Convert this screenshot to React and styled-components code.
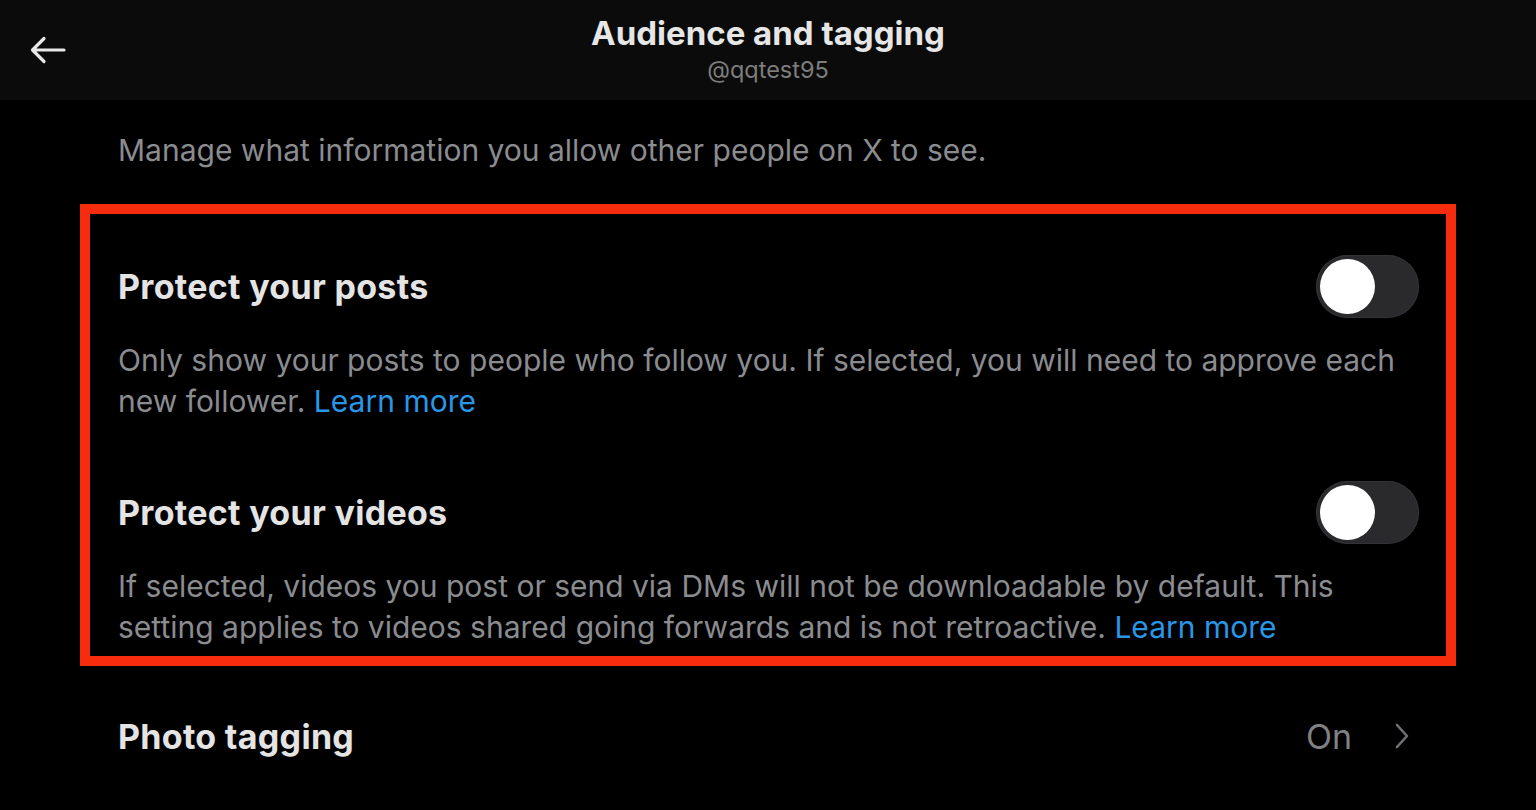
import React from "react";
import styled, { createGlobalStyle } from "styled-components";

const Global = createGlobalStyle`
  html, body { margin: 0; padding: 0; background: #000; }
  body { font-family: Inter, "Noto Sans", sans-serif; -webkit-font-smoothing: antialiased; }
`;

const Page = styled.div`
  width: 1536px;
  height: 810px;
  background: #000;
  overflow: hidden;
  display: flex;
  flex-direction: column;
`;

const Header = styled.header`
  height: 100px;
  background: #0b0b0b;
  display: grid;
  grid-template-columns: 100px 1fr 100px;
  align-items: center;
`;

const BackButton = styled.button`
  background: none;
  border: none;
  padding: 0 0 0 29px;
  display: flex;
  align-items: center;
  color: #e7e7e7;
  height: 100%;
`;

const TitleBlock = styled.div`
  display: flex;
  flex-direction: column;
  align-items: center;
  margin-top: -3px;
`;

const Title = styled.h1`
  margin: 0;
  font-family: Inter, sans-serif;
  font-weight: 700;
  font-size: 33px;
  line-height: 40px;
  letter-spacing: 0px;
  color: #e6e6e6;
`;

const Handle = styled.div`
  font-size: 23.5px;
  line-height: 30px;
  margin-top: 2px;
  color: #7d7d7d;
  letter-spacing: 0px;
`;

const Body = styled.main`
  padding: 30px 80px 0 80px;
  display: flex;
  flex-direction: column;
`;

const Intro = styled.p`
  margin: 0 0 0 38px;
  font-size: 30px;
  line-height: 41px;
  color: #8a8c90;
  letter-spacing: 0px;
`;

const Highlight = styled.section`
  margin-top: 33px;
  border: 10px solid #f72c0c;
  padding: 41px 27px 8px 28px;
  display: flex;
  flex-direction: column;
  gap: 59px;
`;

const Setting = styled.div`
  display: flex;
  flex-direction: column;
  gap: 22px;
`;

const SettingRow = styled.div`
  display: flex;
  align-items: center;
  justify-content: space-between;
  height: 63px;
`;

const Label = styled.div`
  font-weight: 700;
  font-size: 34px;
  color: #e4e4e4;
  letter-spacing: 0.3px;
`;

const Desc = styled.p`
  margin: 0;
  font-size: 30px;
  line-height: 41px;
  color: #8a8c90;
  letter-spacing: 0px;
`;

const Link = styled.a`
  color: #2a96e6;
  text-decoration: none;
`;

const Track = styled.div`
  width: 103px;
  height: 63px;
  border-radius: 32px;
  background: #2a2a2d;
  box-shadow: inset 0 0 0 1px #333337;
  display: flex;
  align-items: center;
  padding-left: 4px;
  box-sizing: border-box;
`;

const Knob = styled.div`
  width: 55px;
  height: 55px;
  border-radius: 50%;
  background: #ffffff;
`;

const NavRow = styled.div`
  margin: 39px 0 0 0;
  padding: 0 46px 0 38px;
  height: 62px;
  display: flex;
  align-items: center;
  justify-content: space-between;
`;

const Value = styled.div`
  display: flex;
  align-items: center;
  gap: 42px;
  font-size: 34px;
  color: #7f8185;
`;

const Toggle = () => (
  <Track>
    <Knob />
  </Track>
);

export default function App() {
  return (
    <Page>
      <Global />
      <Header>
        <BackButton aria-label="Back">
          <svg width="38" height="30" viewBox="0 0 38 30" fill="none" stroke="#e8e8e8" strokeWidth="3.2" strokeLinecap="round" strokeLinejoin="round">
            <path d="M35 15H4M15 3.5L3.5 15L15 26.5" />
          </svg>
        </BackButton>
        <TitleBlock>
          <Title>Audience and tagging</Title>
          <Handle>@qqtest95</Handle>
        </TitleBlock>
        <div />
      </Header>
      <Body>
        <Intro>Manage what information you allow other people on X to see.</Intro>
        <Highlight>
          <Setting>
            <SettingRow>
              <Label>Protect your posts</Label>
              <Toggle />
            </SettingRow>
            <Desc>
              Only show your posts to people who follow you. If selected, you will need to approve each new follower. <Link>Learn more</Link>
            </Desc>
          </Setting>
          <Setting>
            <SettingRow>
              <Label>Protect your videos</Label>
              <Toggle />
            </SettingRow>
            <Desc>
              If selected, videos you post or send via DMs will not be downloadable by default. This setting applies to videos shared going forwards and is not retroactive. <Link>Learn more</Link>
            </Desc>
          </Setting>
        </Highlight>
        <NavRow>
          <Label>Photo tagging</Label>
          <Value>
            On
            <svg width="16" height="28" viewBox="0 0 16 28" fill="none" stroke="#6e7074" strokeWidth="2.6" strokeLinecap="round" strokeLinejoin="round">
              <path d="M3 3l10 11L3 25" />
            </svg>
          </Value>
        </NavRow>
      </Body>
    </Page>
  );
}
